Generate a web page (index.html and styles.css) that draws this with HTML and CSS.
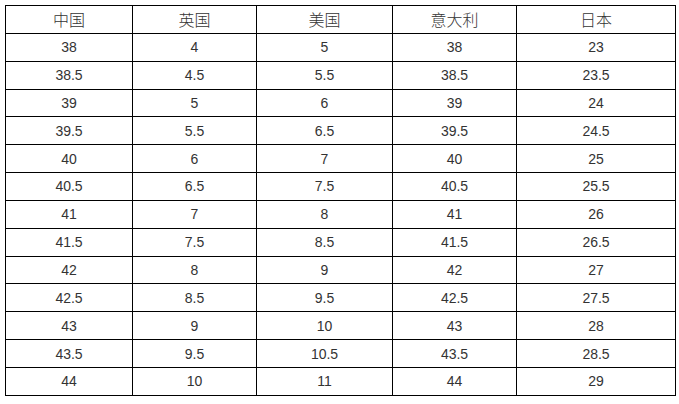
FILE: index.html
```html
<!DOCTYPE html>
<html lang="zh">
<head>
<meta charset="utf-8">
<link rel="stylesheet" href="styles.css">
</head>
<body>
<table class="size-table">
<colgroup>
<col class="c1"><col class="c2"><col class="c3"><col class="c4"><col class="c5">
</colgroup>
<thead>
<tr><th>中国</th><th>英国</th><th>美国</th><th>意大利</th><th>日本</th></tr>
</thead>
<tbody>
<tr><td>38</td><td>4</td><td>5</td><td>38</td><td>23</td></tr>
<tr><td>38.5</td><td>4.5</td><td>5.5</td><td>38.5</td><td>23.5</td></tr>
<tr><td>39</td><td>5</td><td>6</td><td>39</td><td>24</td></tr>
<tr><td>39.5</td><td>5.5</td><td>6.5</td><td>39.5</td><td>24.5</td></tr>
<tr><td>40</td><td>6</td><td>7</td><td>40</td><td>25</td></tr>
<tr><td>40.5</td><td>6.5</td><td>7.5</td><td>40.5</td><td>25.5</td></tr>
<tr><td>41</td><td>7</td><td>8</td><td>41</td><td>26</td></tr>
<tr><td>41.5</td><td>7.5</td><td>8.5</td><td>41.5</td><td>26.5</td></tr>
<tr><td>42</td><td>8</td><td>9</td><td>42</td><td>27</td></tr>
<tr><td>42.5</td><td>8.5</td><td>9.5</td><td>42.5</td><td>27.5</td></tr>
<tr><td>43</td><td>9</td><td>10</td><td>43</td><td>28</td></tr>
<tr><td>43.5</td><td>9.5</td><td>10.5</td><td>43.5</td><td>28.5</td></tr>
<tr><td>44</td><td>10</td><td>11</td><td>44</td><td>29</td></tr>
</tbody>
</table>
</body>
</html>
```
FILE: styles.css
```css
html, body {
  margin: 0;
  padding: 0;
  background: #fff;
}
body {
  padding: 5px 0 0 5px;
}
.size-table {
  border-collapse: collapse;
  table-layout: fixed;
  width: 670px;
  font-family: "Liberation Sans", Arial, "Noto Sans CJK SC", sans-serif;
  font-size: 14px;
  color: #333;
}
.c1 { width: 127px; }
.c2 { width: 124px; }
.c3 { width: 136px; }
.c4 { width: 124px; }
.c5 { width: 159px; }
.size-table th,
.size-table td {
  border: 1px solid #000;
  height: 26.85px;
  padding: 0;
  text-align: center;
  vertical-align: middle;
  font-weight: normal;
  line-height: 16px;
}
.size-table th {
  font-family: "Noto Sans CJK SC", sans-serif;
  font-weight: 300;
  font-size: 16px;
  color: #333;
}
```
